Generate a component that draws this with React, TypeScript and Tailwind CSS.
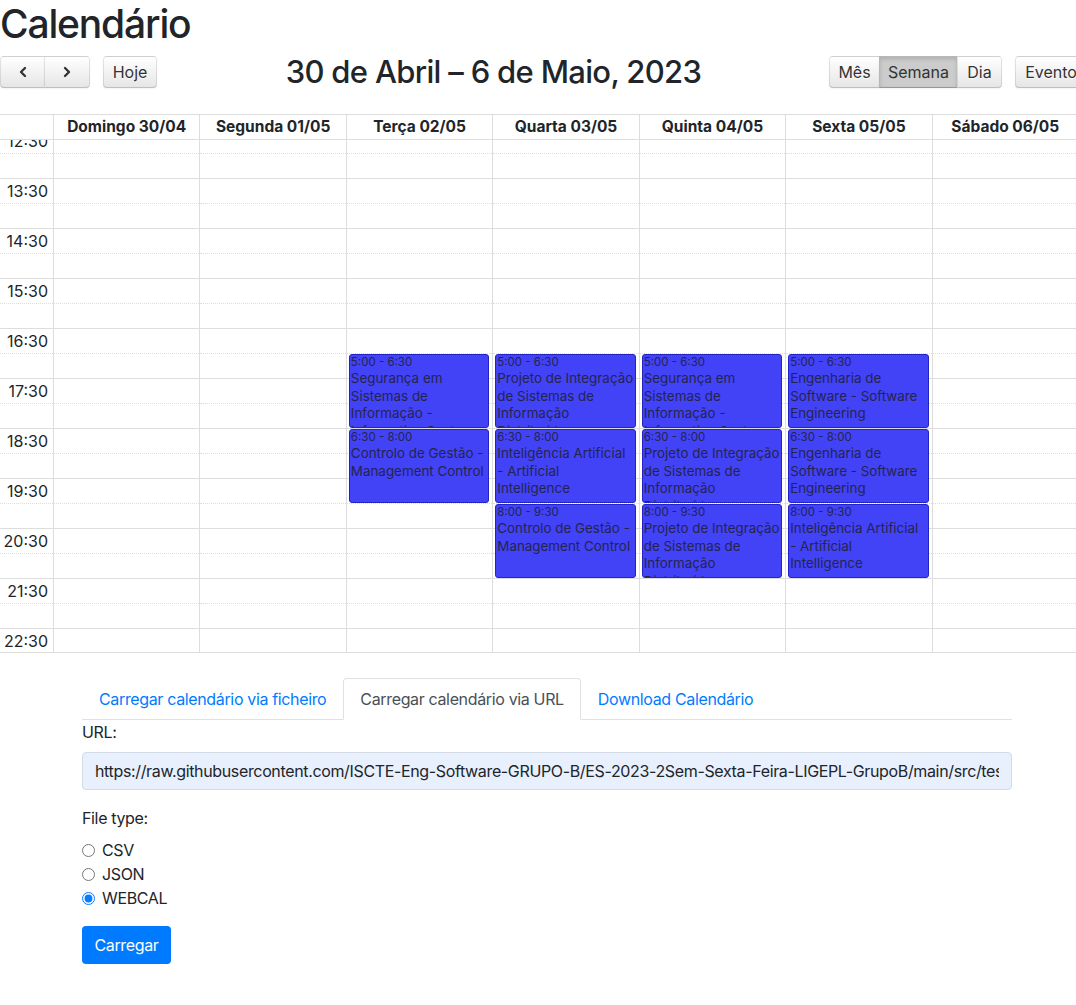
import { ChevronLeft, ChevronRight } from "lucide-react";

const days = [
  "Domingo 30/04",
  "Segunda 01/05",
  "Terça 02/05",
  "Quarta 03/05",
  "Quinta 04/05",
  "Sexta 05/05",
  "Sábado 06/05",
];

// 12:30 -> 22:30, 30 min slots
const slots = Array.from({ length: 21 }, (_, i) => {
  const mins = 12 * 60 + 30 + i * 30;
  const h = Math.floor(mins / 60);
  const m = mins % 60;
  return { label: `${h}:${m === 0 ? "00" : "30"}`, major: m === 30 };
});

const SEG = "Segurança em Sistemas de Informação - Information Systems Security";
const PISID = "Projeto de Integração de Sistemas de Informação Distribuídos";
const CG = "Controlo de Gestão - Management Control";
const IA = "Inteligência Artificial - Artificial Intelligence";
const ES = "Engenharia de Software - Software Engineering";

type CalEvent = { day: number; slot: number; time: string; title: string };

const events: CalEvent[] = [
  { day: 2, slot: 9, time: "5:00 - 6:30", title: SEG },
  { day: 2, slot: 12, time: "6:30 - 8:00", title: CG },
  { day: 3, slot: 9, time: "5:00 - 6:30", title: PISID },
  { day: 3, slot: 12, time: "6:30 - 8:00", title: IA },
  { day: 3, slot: 15, time: "8:00 - 9:30", title: CG },
  { day: 4, slot: 9, time: "5:00 - 6:30", title: SEG },
  { day: 4, slot: 12, time: "6:30 - 8:00", title: PISID },
  { day: 4, slot: 15, time: "8:00 - 9:30", title: PISID },
  { day: 5, slot: 9, time: "5:00 - 6:30", title: ES },
  { day: 5, slot: 12, time: "6:30 - 8:00", title: ES },
  { day: 5, slot: 15, time: "8:00 - 9:30", title: IA },
];

const fcBtn =
  "h-[32px] px-[9.6px] text-[16px] text-[#333] border border-black/10 border-b-black/25 bg-linear-to-b from-white to-[#e6e6e6] shadow-[inset_0_1px_0_rgba(255,255,255,0.2),0_1px_2px_rgba(0,0,0,0.05)] [text-shadow:0_1px_1px_rgba(255,255,255,0.75)] flex items-center justify-center";

function Toolbar() {
  return (
    <div className="flex items-center w-[1087px] h-[32px]">
      <div className="flex items-center w-[158px] shrink-0">
        <div className="flex">
          <button className={`${fcBtn} w-[45px] rounded-l-[4px]`}>
            <ChevronLeft size={16} strokeWidth={3.5} />
          </button>
          <button className={`${fcBtn} w-[46px] rounded-r-[4px] -ml-px`}>
            <ChevronRight size={16} strokeWidth={3.5} />
          </button>
        </div>
        <button className={`${fcBtn} ml-[13px] w-[54px] rounded-[4px]`}>Hoje</button>
      </div>
      <div className="flex-1 text-center">
        <h2 className="text-[31px] leading-[38px] font-medium tracking-[-0.022em] text-[#212529]">
          30 de Abril – 6 de Maio, 2023
        </h2>
      </div>
      <div className="flex items-center shrink-0">
        <div className="flex">
          <button className={`${fcBtn} w-[51px] rounded-l-[4px]`}>Mês</button>
          <button className="h-[32px] w-[79px] -ml-px text-[16px] text-[#333] border border-black/10 border-b-black/25 bg-[#ccc] shadow-[inset_0_2px_4px_rgba(0,0,0,0.15),0_1px_2px_rgba(0,0,0,0.05)] flex items-center justify-center">
            Semana
          </button>
          <button className={`${fcBtn} w-[45px] -ml-px rounded-r-[4px]`}>Dia</button>
        </div>
        <button className={`${fcBtn} ml-[13px] w-[72px] rounded-[4px]`}>Evento</button>
      </div>
    </div>
  );
}

function EventBox({ ev }: { ev: CalEvent }) {
  return (
    <div
      className="absolute left-[2px] right-[3px] h-[74px] overflow-hidden rounded-[3px] border border-[#2323c4] bg-[#4242f7] text-[#242450]"
      style={{ top: ev.slot * 25 + 1 }}
    >
      <div className="px-px text-[11.5px] leading-[15px]">{ev.time}</div>
      <div className="px-px text-[13.4px] leading-[17.5px]">{ev.title}</div>
    </div>
  );
}

function WeekGrid() {
  return (
    <div className="w-[1078px] text-[#212529]">
      <div className="grid grid-cols-[53px_repeat(7,1fr)] border-y border-[#ddd] h-[26px]">
        <div />
        {days.map((d) => (
          <div
            key={d}
            className="border-l border-[#ddd] flex items-center justify-center font-bold text-[15.5px]"
          >
            {d}
          </div>
        ))}
      </div>
      <div className="h-[513px] overflow-hidden border-b border-[#ddd]">
        <div className="grid grid-cols-[53px_repeat(7,1fr)] -mt-[12px]">
          <div>
            {slots.map((s, i) => (
              <div
                key={i}
                className={`h-[25px] border-t border-[#ddd] ${s.major ? "border-solid" : "border-dotted"} flex items-center justify-end pr-[5px] text-[16px]`}
              >
                {s.major ? s.label : ""}
              </div>
            ))}
          </div>
          {days.map((d, di) => (
            <div key={d} className="relative border-l border-[#ddd]">
              {slots.map((s, i) => (
                <div
                  key={i}
                  className={`h-[25px] border-t border-[#ddd] ${s.major ? "border-solid" : "border-dotted"}`}
                />
              ))}
              {events
                .filter((e) => e.day === di)
                .map((e, k) => (
                  <EventBox key={k} ev={e} />
                ))}
            </div>
          ))}
        </div>
      </div>
    </div>
  );
}

function LoadPanel() {
  return (
    <div className="ml-[82px] w-[930px] mt-[25px] text-[16px] text-[#212529] leading-[24px] tracking-[-0.022em]">
      <div className="flex border-b border-[#dee2e6]">
        <a className="px-[16px] py-[8px] border border-transparent -mb-px text-[#007bff]">
          Carregar calendário via ficheiro
        </a>
        <a className="px-[16px] py-[8px] border border-[#dee2e6] border-b-white rounded-t-[4px] -mb-px bg-white text-[#495057]">
          Carregar calendário via URL
        </a>
        <a className="px-[16px] py-[8px] border border-transparent -mb-px text-[#007bff]">
          Download Calendário
        </a>
      </div>
      <div className="mb-[8px]">URL:</div>
      <input
        readOnly
        value="https://raw.githubusercontent.com/ISCTE-Eng-Software-GRUPO-B/ES-2023-2Sem-Sexta-Feira-LIGEPL-GrupoB/main/src/test/resources/calendar.ics"
        className="block w-full h-[38px] px-[12px] rounded-[4px] border border-[#d3dbe6] bg-[#e8f0fe] text-[16px] tracking-[-0.022em] text-[#212529] outline-none"
      />
      <div className="mt-[16px] mb-[8px]">File type:</div>
      {["CSV", "JSON", "WEBCAL"].map((t) => (
        <label key={t} className="flex items-center h-[24px]">
          <input
            type="radio"
            name="ft"
            readOnly
            checked={t === "WEBCAL"}
            className="m-0 w-[13px] h-[13px] accent-[#0a7cff]"
          />
          <span className="ml-[7px]">{t}</span>
        </label>
      ))}
      <button className="mt-[16px] h-[38px] w-[89px] rounded-[4px] bg-[#007bff] text-white text-[16px]">
        Carregar
      </button>
    </div>
  );
}

export default function App() {
  return (
    <div className="w-[1076px] min-h-[1005px] overflow-hidden bg-white font-['Inter',sans-serif] text-[#212529]">
      <h1 className="text-[39px] leading-[48px] font-medium tracking-[-0.03em] mb-[8px]">Calendário</h1>
      <Toolbar />
      <div className="mt-[26px]">
        <WeekGrid />
      </div>
      <LoadPanel />
    </div>
  );
}
